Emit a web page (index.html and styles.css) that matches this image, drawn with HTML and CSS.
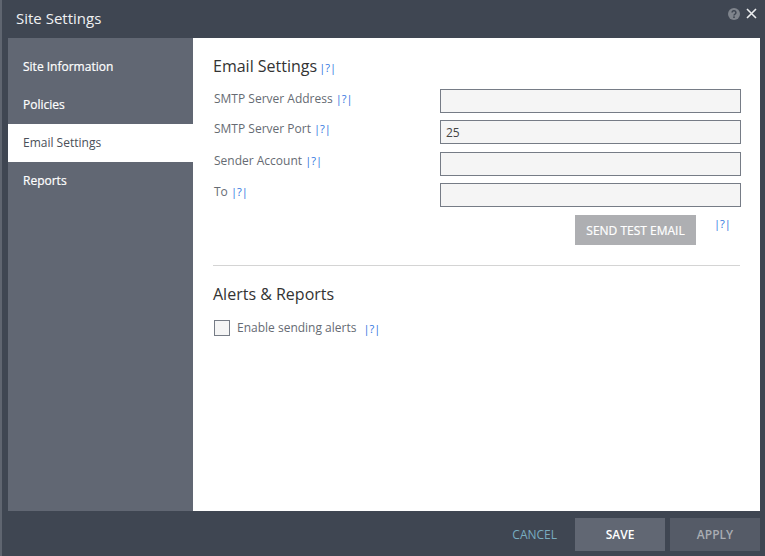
FILE: index.html
```html
<!DOCTYPE html>
<html lang="en">
<head>
<meta charset="utf-8">
<title>Site Settings</title>
<link rel="stylesheet" href="styles.css">
</head>
<body>
<div class="dialog">
  <header class="titlebar">
    <h1 class="title">Site Settings</h1>
    <div class="title-icons">
      <svg class="icon" width="12" height="12" viewBox="0 0 12 12"><circle cx="6" cy="6" r="6" fill="#7f848c"/><path d="M4.1 4.6a1.9 1.9 0 1 1 2.9 1.6c-.7.4-1 .7-1 1.4" fill="none" stroke="#3f4652" stroke-width="1.5"/><rect x="5.2" y="8.4" width="1.6" height="1.6" fill="#3f4652"/></svg>
      <svg class="icon" width="11" height="11" viewBox="0 0 11 11"><path d="M1 1l9 9M10 1l-9 9" stroke="#eceef0" stroke-width="1.6" fill="none"/></svg>
    </div>
  </header>
  <div class="body">
    <nav class="sidebar">
      <a class="nav-item">Site Information</a>
      <a class="nav-item">Policies</a>
      <a class="nav-item active">Email Settings</a>
      <a class="nav-item">Reports</a>
    </nav>
    <main class="content">
      <h2 class="section-title"><span>Email Settings</span><span class="help help-title">|?|</span></h2>
      <div class="form">
        <div class="row row-1"><span class="label">SMTP Server Address <span class="help">|?|</span></span><div class="input"></div></div>
        <div class="row row-2"><span class="label">SMTP Server Port <span class="help">|?|</span></span><div class="input">25</div></div>
        <div class="row row-3"><span class="label">Sender Account <span class="help">|?|</span></span><div class="input"></div></div>
        <div class="row row-4"><span class="label">To <span class="help">|?|</span></span><div class="input"></div></div>
      </div>
      <div class="test-row">
        <button class="btn-test">SEND TEST EMAIL</button>
        <span class="help test-help">|?|</span>
      </div>
      <hr class="divider">
      <h2 class="section-title alerts">Alerts &amp; Reports</h2>
      <div class="check-row">
        <span class="checkbox"></span>
        <span class="check-label">Enable sending alerts</span>
        <span class="help">|?|</span>
      </div>
    </main>
  </div>
  <footer class="footer">
    <a class="cancel">CANCEL</a>
    <button class="btn btn-save">SAVE</button>
    <button class="btn btn-apply">APPLY</button>
  </footer>
</div>
</body>
</html>
```
FILE: styles.css
```css
html, body {
  margin: 0;
  padding: 0;
  height: 100%;
  overflow: hidden;
  font-family: "Open Sans", sans-serif;
}
.dialog {
  width: 765px;
  height: 556px;
  box-sizing: border-box;
  display: flex;
  flex-direction: column;
  background: #3f4652;
  border-left: 2px solid #5f6570;
}
.titlebar {
  height: 38px;
  flex: none;
  display: flex;
  justify-content: space-between;
  padding: 0 8px 0 14px;
  background: #3f4652;
}
.title {
  margin: 0;
  font-size: 15px;
  font-weight: 400;
  line-height: 36px;
  color: #f0f1f2;
}
.title-icons {
  display: flex;
  gap: 6px;
  align-items: flex-start;
  padding-top: 8px;
}
.body {
  flex: 1;
  display: flex;
  margin: 0 5px 0 6px;
  min-height: 0;
}
.sidebar {
  width: 185px;
  flex: none;
  padding-top: 10px;
  background: #616773;
}
.nav-item {
  display: block;
  height: 38px;
  padding-left: 15px;
  font-size: 12px;
  line-height: 38px;
  color: #fff;
  -webkit-text-stroke: 0.2px #fff;
}
.nav-item.active {
  background: #fff;
  color: #4a4f58;
  -webkit-text-stroke: 0;
}
.content {
  flex: 1;
  background: #fff;
  padding: 17px 19px 0 20px;
}
.section-title {
  margin: 0;
  font-size: 16px;
  font-weight: 400;
  line-height: 22px;
  color: #333;
}
.help {
  font-size: 11px;
  color: #2f75e0;
  font-weight: 400;
}
.help-title {
  margin-left: 2px;
}
.form {
  margin-top: 10px;
}
.row {
  display: flex;
  justify-content: space-between;
  align-items: flex-start;
}
.row-1 { margin-bottom: 7px; }
.row-2 { margin-bottom: 8px; }
.row-3 { margin-bottom: 7px; }
.row-1 .label { padding-top: 1px; }
.label {
  padding-left: 1px;
  font-size: 12px;
  line-height: 18px;
  color: #666b73;
}
.input {
  width: 301px;
  height: 24px;
  box-sizing: border-box;
  border: 1px solid #767c86;
  background: #f5f5f5;
  padding-left: 5px;
  font-size: 12px;
  line-height: 23px;
  color: #444;
}
.test-row {
  display: flex;
  justify-content: flex-end;
  align-items: flex-start;
  margin-top: 8px;
}
.btn-test {
  width: 121px;
  height: 30px;
  padding: 0;
  border: 0;
  background: #aeafb2;
  color: #fff;
  font-family: inherit;
  font-size: 12px;
  -webkit-text-stroke: 0.2px #fff;
}
.test-help {
  width: 27px;
  margin-left: 18px;
  line-height: 18px;
}
.divider {
  margin: 20px 1px 0 0;
  border: 0;
  border-top: 1px solid #d4d4d4;
}
.alerts {
  margin-top: 17px;
}
.check-row {
  display: flex;
  align-items: center;
  margin-top: 14px;
  padding-left: 1px;
}
.checkbox {
  width: 16px;
  height: 16px;
  box-sizing: border-box;
  border: 1px solid #767c86;
  background: #f5f5f5;
}
.check-label {
  margin-left: 7px;
  margin-right: 7px;
  font-size: 12px;
  line-height: 18px;
  color: #666b73;
}
.footer {
  height: 45px;
  flex: none;
  display: flex;
  align-items: flex-start;
  justify-content: flex-end;
  padding: 7px 5px 0 0;
  box-sizing: border-box;
  gap: 5px;
}
.cancel {
  margin-right: 13px;
  font-size: 12px;
  line-height: 33px;
  color: #78acc0;
}
.btn {
  width: 90px;
  height: 33px;
  padding: 0;
  border: 0;
  font-family: inherit;
  font-size: 12px;
  font-weight: 600;
}
.btn-save {
  background: #616773;
  color: #fff;
}
.btn-apply {
  background: #555b67;
  color: #a9adb3;
}
```
